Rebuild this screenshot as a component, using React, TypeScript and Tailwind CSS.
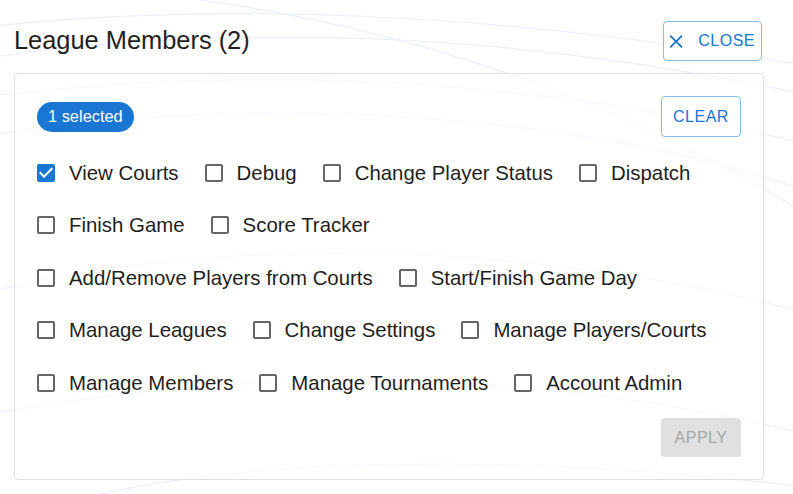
import { useState } from 'react'

const ROWS: string[][] = [
  ['View Courts', 'Debug', 'Change Player Status', 'Dispatch'],
  ['Finish Game', 'Score Tracker'],
  ['Add/Remove Players from Courts', 'Start/Finish Game Day'],
  ['Manage Leagues', 'Change Settings', 'Manage Players/Courts'],
  ['Manage Members', 'Manage Tournaments', 'Account Admin'],
]

function CheckIcon({ checked }: { checked: boolean }) {
  return (
    <svg width="24" height="24" viewBox="0 0 24 24" className={checked ? 'text-[#1976d2]' : 'text-[#666666]'} fill="currentColor">
      {checked ? (
        <path d="M19 3H5c-1.11 0-2 .9-2 2v14c0 1.1.89 2 2 2h14c1.1 0 2-.9 2-2V5c0-1.1-.9-2-2-2zm-9 14l-5-5 1.41-1.41L10 14.17l7.59-7.59L19 8l-9 9z" />
      ) : (
        <path d="M19 5v14H5V5h14m0-2H5c-1.11 0-2 .9-2 2v14c0 1.1.89 2 2 2h14c1.1 0 2-.9 2-2V5c0-1.1-.9-2-2-2z" />
      )}
    </svg>
  )
}

function Backdrop() {
  // faint swoosh lines behind the dialog
  return (
    <svg className="absolute inset-0 pointer-events-none" width="793" height="494" viewBox="0 0 793 494" fill="none">
      <g stroke="#eceef8" strokeWidth="1.2">
        <path d="M-40 30 C 200 0, 500 10, 830 70" />
        <path d="M-40 62 C 220 20, 520 30, 830 100" />
        <path d="M-40 100 C 260 60, 560 80, 830 150" />
        <path d="M-40 140 C 240 90, 600 110, 830 200" />
        <path d="M-40 300 C 200 230, 560 240, 830 320" />
        <path d="M-40 420 C 260 360, 560 370, 830 440" />
        <path d="M100 494 C 300 450, 600 460, 830 490" />
        <path d="M200 0 C 420 30, 650 110, 830 230" />
      </g>
    </svg>
  )
}

export default function App() {
  const [checked, setChecked] = useState<Record<string, boolean>>({ 'View Courts': true })
  const count = Object.values(checked).filter(Boolean).length

  return (
    <div className="relative w-[793px] h-[494px] bg-white overflow-hidden font-['Liberation_Sans',Arial,sans-serif] text-[#1f1f1f]">
      <Backdrop />
      <div className="relative pl-[14px] pt-[21px]">
        <div className="flex items-center justify-between h-[40px] pr-[31px]">
          <h1 className="text-[25.4px] leading-none">League Members (2)</h1>
          <button className="flex items-center h-[40px] w-[99px] pl-[1px] pr-[6px] gap-[11px] border border-[#8cbae8] rounded-[4px] text-[#1976d2] text-[16px] tracking-[0.5px] bg-white">
            <svg width="23" height="23" viewBox="0 0 24 24" fill="currentColor">
              <path d="M19 6.41 17.59 5 12 10.59 6.41 5 5 6.41 10.59 12 5 17.59 6.41 19 12 13.41 17.59 19 19 17.59 13.41 12z" />
            </svg>
            CLOSE
          </button>
        </div>

        <div className="mt-[12px] w-[750px] border border-[#e0e0e0] rounded-[4px] bg-white/60 px-[22px] pt-[22px] pb-[22px]">
          <div className="flex items-center justify-between h-[41px]">
            <span className="h-[30px] px-[11px] flex items-center rounded-full bg-[#1976d2] text-white text-[16.4px]">
              {count} selected
            </span>
            <button
              onClick={() => setChecked({})}
              className="h-[41px] w-[80px] border border-[#8cbae8] rounded-[4px] text-[#1976d2] text-[16px] tracking-[0.5px] bg-white"
            >
              CLEAR
            </button>
          </div>

          <div className="mt-[15px] flex flex-col gap-[10.5px]">
            {ROWS.map((row, i) => (
              <div key={i} className="flex items-center h-[42px] gap-[23px] -ml-[3px]">
                {row.map((label) => (
                  <label key={label} className="flex items-center gap-[11px] cursor-pointer text-[20.4px]">
                    <input
                      type="checkbox"
                      className="hidden"
                      checked={!!checked[label]}
                      onChange={() => setChecked({ ...checked, [label]: !checked[label] })}
                    />
                    <CheckIcon checked={!!checked[label]} />
                    <span>{label}</span>
                  </label>
                ))}
              </div>
            ))}
          </div>

          <div className="mt-[14px] flex justify-end">
            <button disabled className="h-[39px] w-[80px] rounded-[4px] bg-[#e0e0e0] text-[#a6a6a6] text-[16px] tracking-[0.5px]">
              APPLY
            </button>
          </div>
        </div>
      </div>
    </div>
  )
}
